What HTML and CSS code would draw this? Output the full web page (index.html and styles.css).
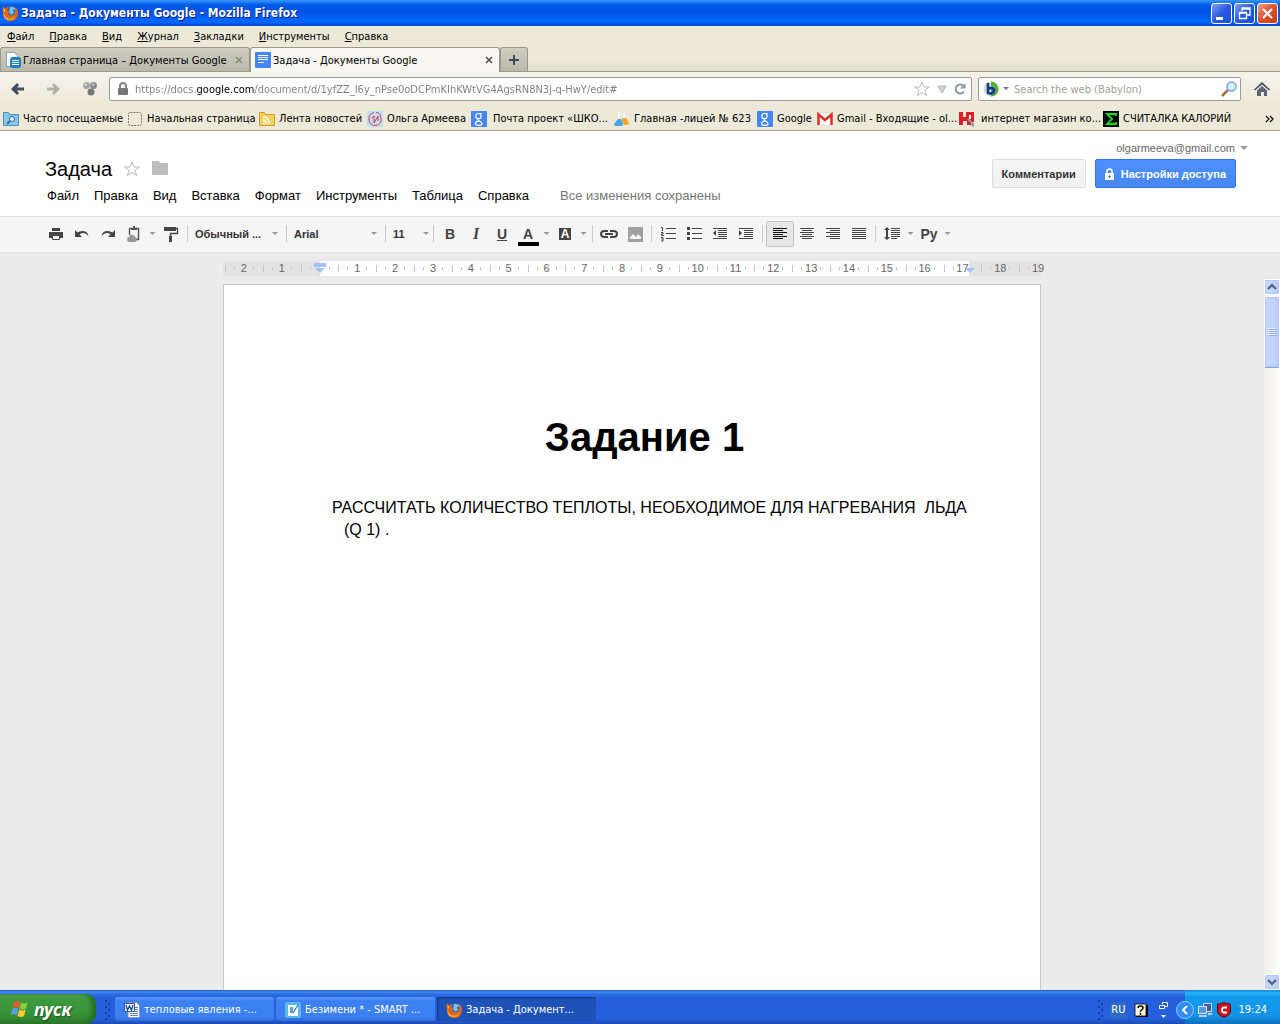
FILE: index.html
```html
<!DOCTYPE html>
<html lang="ru">
<head>
<meta charset="utf-8">
<title>Задача - Документы Google</title>
<link rel="stylesheet" href="styles.css">
</head>
<body>
<svg class="defs" aria-hidden="true">
  <defs>
    <symbol id="firefox" viewBox="0 0 16 16">
      <circle cx="8.500" cy="7.500" r="6.500" fill="#2b62b5"/>
      <path d="M8 2q4-1 6 3-2-1-3 0l1 3-3 2-2-3z" fill="#6fc3ee"/>
      <path d="M1 1l2 2.500q2-2 4-1-2 1-2 3l3 1-2 2q1 2 4 2 3-1 3-4 1-3-1-5 4 2 4 6 0 8-7 8.500-6 0-8-6.500-1-4 0-8.500z" fill="#e2661a"/>
      <path d="M1.500 5q0 6 4 8 5 2 8-3-1 5-6 5.500-5 0-6-5z" fill="#f7a12e"/>
      <path d="M1.500 3l1.500 2-1 3z" fill="#fbd04a"/>
    </symbol>
    <symbol id="gletter" viewBox="0 0 16 16">
      <rect width="16" height="16" rx="1" fill="#4486f4"/>
      <path d="M11 2.500H7.500C5.500 2.500 4.800 4 4.800 5.200c0 1.500 1 2.500 2.700 2.500 1.600 0 2.600-1 2.600-2.500 0-1.300-.8-2.200-1.600-2.600M7.500 7.800c-1 .7-.8 1.300.5 1.900 2 .9 3 1.500 3 2.700 0 1.300-1.500 2-3.200 2-2 0-3.300-.8-3.300-2.100 0-1.300 1.500-2.100 4-2.200" fill="none" stroke="#fff" stroke-width="1.200"/>
    </symbol>
    <symbol id="outline-star" viewBox="0 0 16 16">
      <path d="M8 1l2 5h5.300l-4.300 3.300 1.600 5.200L8 11.500l-4.600 3L5 9.300.7 6H6z" fill="#fff" stroke="#b9b9b9"/>
    </symbol>
  </defs>
</svg>

<header class="titlebar">
  <svg class="i16"><use href="#firefox"/></svg>
  <h1 class="window-title">Задача - Документы Google - Mozilla Firefox</h1>
  <div class="window-buttons">
    <button class="wbtn" aria-label="Свернуть"><svg viewBox="0 0 19 19"><path d="M4 13h7v3H4z" fill="#fff"/></svg></button>
    <button class="wbtn" aria-label="Восстановить"><svg viewBox="0 0 19 19"><path d="M7 7V4h8v7h-3M7 5h8M4.500 8.500h7v6h-7zM4 9h8" fill="none" stroke="#fff" stroke-width="1.300"/></svg></button>
    <button class="wbtn wbtn-close" aria-label="Закрыть"><svg viewBox="0 0 19 19"><path d="M5 5l9 9M14 5l-9 9" stroke="#fff" stroke-width="2.200"/></svg></button>
  </div>
</header>

<nav class="menubar" aria-label="Меню браузера">
  <button><u>Ф</u>айл</button><button><u>П</u>равка</button><button><u>В</u>ид</button><button><u>Ж</u>урнал</button><button><u>З</u>акладки</button><button><u>И</u>нструменты</button><button><u>С</u>правка</button>
</nav>

<div class="tabs">
  <div class="tab">
    <svg class="i16" viewBox="0 0 16 16"><path d="M1.500.5h8l3 3v11h-11z" fill="#fff" stroke="#7ba2c5"/><path d="M7 5h6q3 0 3 3v5q0 3-3 3H8q-3 0-3-3V8q0-2 2-3z" fill="#1b7fc0"/><path d="M7 8.500h7M7 10.500h7M7 12.500h7" stroke="#fff"/></svg>
    <span class="tab-label">Главная страница – Документы Google</span>
    <button class="tab-close" aria-label="Закрыть вкладку"><svg viewBox="0 0 8 8"><path d="M1 1l6 6M7 1L1 7" stroke="currentColor" stroke-width="1.500"/></svg></button>
  </div>
  <div class="tab tab-active">
    <svg class="i16" viewBox="0 0 16 16"><rect width="16" height="16" rx="1" fill="#4486f4"/><path d="M3 3.500h10M3 5.500h10M3 7.500h10M3 10.500h6" stroke="#fff"/></svg>
    <span class="tab-label">Задача - Документы Google</span>
    <button class="tab-close" aria-label="Закрыть вкладку"><svg viewBox="0 0 8 8"><path d="M1 1l6 6M7 1L1 7" stroke="currentColor" stroke-width="1.500"/></svg></button>
  </div>
  <button class="tab-new" aria-label="Новая вкладка"><svg viewBox="0 0 12 12"><path d="M6 1v10M1 6h10" stroke="#3d4a5a" stroke-width="2"/></svg></button>
</div>

<div class="navbar">
  <button class="nav-btn" aria-label="Назад"><svg class="i16" viewBox="0 0 16 16"><path d="M7 2L1 8l6 6 2-2-2-2.500h7v-3H7L9 4z" fill="#434f5e"/></svg></button>
  <button class="nav-btn" aria-label="Вперёд"><svg class="i16" viewBox="0 0 16 16"><path d="M8 2l6 6-6 6-2-2 2-2.500H1v-3h7L6 4z" fill="#b3b3ae"/></svg></button>
  <button class="nav-btn" aria-label="Дополнение"><svg class="i16" viewBox="0 0 16 16"><circle cx="4.500" cy="4.500" r="3.500" fill="#a2a2a2"/><circle cx="11.500" cy="4.500" r="3.500" fill="#8b8b8b"/><circle cx="9" cy="11" r="3.500" fill="#777"/><circle cx="3.500" cy="3.500" r="1.500" fill="#ccc"/><circle cx="11" cy="3.500" r="1.500" fill="#bbb"/></svg></button>
  <div class="field url-field">
    <svg class="i16" viewBox="0 0 16 16"><path d="M5 8V5q0-3 3-3t3 3v3" fill="none" stroke="#858585" stroke-width="2"/><rect x="3" y="7" width="10" height="7" rx="1" fill="#767676"/></svg>
    <input class="url" type="text" aria-label="Адрес" value="https://docs.google.com/document/d/1yfZZ_I6y_nPse0oDCPmKIhKWtVG4AgsRN8N3j-q-HwY/edit#">
    <svg class="i16"><use href="#outline-star"/></svg>
    <svg class="i10" viewBox="0 0 10 10"><path d="M1 2h8L5 9z" fill="#cfd5dc" stroke="#abb4bd"/></svg>
    <svg class="i12" viewBox="0 0 12 12"><path d="M10 8.500A4.500 4.500 0 1 1 9 2.500" fill="none" stroke="#8a96a4" stroke-width="2"/><path d="M11.500 0v5.500H6z" fill="#8a96a4"/></svg>
  </div>
  <div class="field search-field">
    <svg class="i16" viewBox="0 0 16 16"><circle cx="8" cy="8" r="7.500" fill="#c9e4c0"/><path d="M8 .5a7.500 7.500 0 0 1 0 15z" fill="#56b03a"/><path d="M5 2v11M5 9q0-2 3-2t3 2.500-3 3-3-2.500" fill="none" stroke="#1d2f9c" stroke-width="2.500"/></svg>
    <svg class="caret" viewBox="0 0 6 4"><path d="M0 0h6L3 3z" fill="#777"/></svg>
    <input class="search" type="search" aria-label="Поиск" placeholder="Search the web (Babylon)">
    <svg class="i16" viewBox="0 0 16 16"><path d="M1 15l6-6" stroke="#b0693a" stroke-width="2.500"/><circle cx="10.500" cy="5.500" r="4.500" fill="#d6effd" stroke="#7fa6dc" stroke-width="1.500"/></svg>
  </div>
  <button class="nav-btn" aria-label="Домой"><svg class="i16" viewBox="0 0 16 16"><path d="M0 8.500L8 1l8 7.500-1 1-7-6-7 6z" fill="#434f5e"/><path d="M3 9.500l5-4.500 5 4.500V15h-3v-4H7v4H3z" fill="#5a6674"/></svg></button>
</div>

<nav class="bookmarks" aria-label="Закладки">
  <a href="#"><svg class="i16" viewBox="0 0 16 16"><path d="M.5 1.500h5l1 2h9v11H.5z" fill="#8fc4ea" stroke="#4a8fc4"/><circle cx="9" cy="8" r="2.500" fill="#dff1fc" stroke="#2d6ea5"/><path d="M7 10l-3 3" stroke="#2d6ea5" stroke-width="2"/></svg>Часто посещаемые</a>
  <a href="#"><svg class="i16" viewBox="0 0 16 16"><rect x="1.500" y="1.500" width="13" height="13" rx="2" fill="none" stroke="#777" stroke-dasharray="2 1"/></svg>Начальная страница</a>
  <a href="#"><svg class="i16" viewBox="0 0 16 16"><path d="M.5 1.500h5l1 2h9v11H.5z" fill="#f7cf5c" stroke="#cf9c27"/><path d="M4 6q6 0 6 7M4 9q3 0 3 4" fill="none" stroke="#fff" stroke-width="1.500"/><circle cx="4.500" cy="12.500" r="1" fill="#fff"/></svg>Лента новостей</a>
  <a href="#"><svg class="i16" viewBox="0 0 16 16"><rect width="16" height="16" fill="#bfdff5"/><path d="M7 1.500Q1 3 2 9t7 5.500q6-1.500 5-7.500t-5-5.500M4.500 7L7 5v7l4-7v5" fill="none" stroke="#de3d48"/></svg>Ольга Армеева</a>
  <a href="#"><svg class="i16"><use href="#gletter"/></svg><span class="indented">Почта проект «ШКО...</span></a>
  <a href="#"><svg class="i16" viewBox="0 0 16 16"><path d="M5 1v6M10 2v5" stroke="#fff" stroke-width="2"/><path d="M4 8h3l2 5q0 2-2 2H2q-2 0-2-2z" fill="#45a3df"/><path d="M8 7h4l3 5q0 2-2 2h-3l-2-4z" fill="#f6a332"/></svg>Главная -лицей № 623</a>
  <a href="#"><svg class="i16"><use href="#gletter"/></svg>Google</a>
  <a href="#"><svg class="i16" viewBox="0 0 16 16"><rect y="2" width="16" height="12" rx="1" fill="#fff" stroke="#d9d9d9"/><path d="M1.500 14V3.500L8 9l6.500-5.500V14" fill="none" stroke="#dc2f25" stroke-width="2.500"/></svg>Gmail - Входящие - ol...</a>
  <a href="#"><svg class="i16" viewBox="0 0 16 16"><path d="M0 1h4v5h3V1h8v10h-3v3H8v-4H4v4H0z" fill="#dc1f26"/><path d="M10 4h2v4h-2z" fill="#fff"/><path d="M9 8l5 5-1 1 2 1" fill="none" stroke="#999" stroke-width="2"/></svg><span class="indented">интернет магазин ко...</span></a>
  <a href="#"><svg class="i16" viewBox="0 0 16 16"><rect width="16" height="16"/><path d="M13 5V3H4l5 5-5 5h9v-2" fill="none" stroke="#0fe01f" stroke-width="1.800"/></svg>СЧИТАЛКА КАЛОРИЙ</a>
  <button class="more" aria-label="Ещё закладки"><svg class="i10" viewBox="0 0 10 10"><path d="M1 2l3 3-3 3M5 2l3 3-3 3" fill="none" stroke="#111" stroke-width="1.300"/></svg></button>
</nav>

<section class="docs-header">
  <div class="docs-main">
    <div class="title-row">
      <h2 class="doc-title">Задача</h2>
      <svg class="i16"><use href="#outline-star"/></svg>
      <svg class="i16" viewBox="0 0 16 16"><path d="M0 0h7l1 2h8v12H0z" fill="#bdbdbd"/></svg>
    </div>
    <nav class="docs-menu" aria-label="Меню документа">
      <button>Файл</button><button>Правка</button><button>Вид</button><button>Вставка</button><button>Формат</button><button>Инструменты</button><button>Таблица</button><button>Справка</button>
      <span class="saved">Все изменения сохранены</span>
    </nav>
  </div>
  <div class="docs-side">
    <button class="account">olgarmeeva@gmail.com <svg class="account-caret" viewBox="0 0 8 4"><path d="M0 0h8L4 4z" fill="#999"/></svg></button>
    <div class="actions">
      <button class="btn">Комментарии</button>
      <button class="btn btn-primary"><svg class="lock" viewBox="0 0 9 12"><path d="M2 6V3.500q0-2.500 2.500-2.500T7 3.500V6" fill="none" stroke="#fff" stroke-width="1.500"/><path d="M0 5h9v7H0z" fill="#fff"/><path d="M4 7h1v1h1v1H5v1H4V9H3V8h1z" fill="#4787ed"/></svg>Настройки доступа</button>
    </div>
  </div>
</section>

<div class="toolbar" role="toolbar" aria-label="Форматирование">
  <button class="tool" aria-label="Печать"><svg class="i16" viewBox="0 0 16 16"><path d="M4 2h8v3H4zM1 6h14v6h-3V9H4v3H1z" fill="#444"/><path d="M4.500 9.500h7v4h-7z" fill="#f5f5f5" stroke="#444"/></svg></button>
  <button class="tool" aria-label="Отменить"><svg class="i16" viewBox="0 0 16 16"><path d="M1 4v7h7L5.500 8.500Q10 5 14.500 10q-1-5-6-5Q5.500 5 3.500 6.500z" fill="#444"/></svg></button>
  <button class="tool" aria-label="Повторить"><svg class="i16" viewBox="0 0 16 16"><path d="M15 4v7H8l2.500-2.500Q6 5 1.500 10q1-5 6-5 3 0 5 1.500z" fill="#444"/></svg></button>
  <button class="tool" aria-label="Веб-буфер"><svg class="i16" viewBox="0 0 16 16"><path d="M3.500 9V2.500h9v11H10" fill="none" stroke="#555" stroke-width="1.400"/><path d="M5 2h2V0h2v2h2v2H5z" fill="#555"/><path d="M4 16q-3 0-3-3 0-2 2-2 1-3 4-2 2 0 2 2 2 0 2 2.500T9 16z" fill="#999"/></svg></button>
  <button class="drop" aria-label="Открыть веб-буфер"></button>
  <button class="tool" aria-label="Копировать форматирование"><svg class="i16" viewBox="0 0 16 16"><path d="M1 1h12v4H1z" fill="#444"/><path d="M13 2.500h1.500v5h-7v3" fill="none" stroke="#444" stroke-width="1.300"/><path d="M6 10h3v6H6z" fill="#444"/></svg></button>
  <i class="sep"></i>
  <label class="pick"><select aria-label="Стиль"><option>Обычный ...</option></select></label>
  <i class="sep"></i>
  <label class="pick"><select aria-label="Шрифт"><option>Arial</option></select></label>
  <i class="sep"></i>
  <label class="pick pick-small"><select aria-label="Размер"><option>11</option></select></label>
  <i class="sep"></i>
  <button class="tool letter" aria-label="Полужирный"><b>B</b></button>
  <button class="tool letter italic" aria-label="Курсив"><b>I</b></button>
  <button class="tool letter" aria-label="Подчёркнутый"><u>U</u></button>
  <button class="tool letter text-color" aria-label="Цвет текста">A</button>
  <button class="drop" aria-label="Выбрать цвет текста"></button>
  <button class="tool" aria-label="Цвет фона"><span class="marker">A</span></button>
  <button class="drop" aria-label="Выбрать цвет фона"></button>
  <i class="sep"></i>
  <button class="tool" aria-label="Ссылка"><svg class="link-icon" viewBox="0 0 18 16"><path d="M8 5H4.500Q1 5 1 8t3.500 3H8M10 5h3.500Q17 5 17 8t-3.500 3H10M5 8h8" fill="none" stroke="#444" stroke-width="2"/></svg></button>
  <button class="tool" aria-label="Изображение"><svg class="i16" viewBox="0 0 16 16"><path d="M1 1h15v15H1z" fill="#a0a0a0"/><path d="M3 13v-2l3-3 3 3 2-3 3 3v2z" fill="#f5f5f5"/></svg></button>
  <i class="sep"></i>
  <button class="tool" aria-label="Нумерованный список"><svg class="i16" viewBox="0 0 16 16"><path d="M6 2.500h10M6 7.500h10M6 12.500h10M1 1.500h1.500V5M1 6.500h2v1.500H1.500v1.500H4M1 11.500h2V15H1M3 13H1.500" fill="none" stroke="#444"/></svg></button>
  <button class="tool" aria-label="Маркированный список"><svg class="i16" viewBox="0 0 16 16"><path d="M1 1h3v3H1zM1 6h3v3H1zM1 11h3v3H1z" fill="#444"/><path d="M6 2.500h10M6 7.500h10M6 12.500h10" stroke="#444"/></svg></button>
  <button class="tool" aria-label="Уменьшить отступ"><svg class="i16" viewBox="0 0 16 16"><path d="M1 2.500h14M6 4.500h9M6 6.500h9M6 8.500h9M6 10.500h9M1 12.500h14" stroke="#444"/><path d="M4 4v6L1 7z" fill="#444"/></svg></button>
  <button class="tool" aria-label="Увеличить отступ"><svg class="i16" viewBox="0 0 16 16"><path d="M1 2.500h14M6 4.500h9M6 6.500h9M6 8.500h9M6 10.500h9M1 12.500h14" stroke="#444"/><path d="M1 4v6l3-3z" fill="#444"/></svg></button>
  <i class="sep"></i>
  <button class="tool pressed" aria-label="По левому краю" aria-pressed="true"><svg class="i16" viewBox="0 0 16 16"><path d="M1 2.500h14M1 4.500h10M1 6.500h14M1 8.500h10M1 10.500h14M1 12.500h10" stroke="#111"/></svg></button>
  <button class="tool" aria-label="По центру"><svg class="i16" viewBox="0 0 16 16"><path d="M1 2.500h14M3 4.500h10M1 6.500h14M3 8.500h10M1 10.500h14M3 12.500h10" stroke="#444"/></svg></button>
  <button class="tool" aria-label="По правому краю"><svg class="i16" viewBox="0 0 16 16"><path d="M1 2.500h14M5 4.500h10M1 6.500h14M5 8.500h10M1 10.500h14M5 12.500h10" stroke="#444"/></svg></button>
  <button class="tool" aria-label="По ширине"><svg class="i16" viewBox="0 0 16 16"><path d="M1 2.500h14M1 4.500h14M1 6.500h14M1 8.500h14M1 10.500h14M1 12.500h14" stroke="#444"/></svg></button>
  <i class="sep"></i>
  <button class="tool" aria-label="Интервал"><svg class="i16" viewBox="0 0 16 16"><path d="M7 2.500h9M7 4.500h9M7 6.500h9M7 8.500h9M7 10.500h9M7 12.500h6" stroke="#444"/><path d="M3 3v10" stroke="#444" stroke-width="2"/><path d="M3 1l3 3H0zM3 14l3-3H0z" fill="#444"/></svg></button>
  <button class="drop" aria-label="Выбрать интервал"></button>
  <button class="tool input-lang" aria-label="Способ ввода">Ру</button>
  <button class="drop" aria-label="Выбрать способ ввода"></button>
</div>

<main class="workspace">
  <div class="ruler-row">
    <div class="ruler">
      <ol class="marks">
        <li>2</li><li>1</li><li class="zero"></li><li>1</li><li>2</li><li>3</li><li>4</li><li>5</li><li>6</li><li>7</li><li>8</li><li>9</li><li>10</li><li>11</li><li>12</li><li>13</li><li>14</li><li>15</li><li>16</li><li>17</li><li>18</li><li>19</li>
      </ol>
      <svg class="indent indent-left" viewBox="0 0 12 11"><path d="M0 0h12v4H0zM1 5h10L6 10z" fill="#a4c2f7"/></svg>
      <svg class="indent indent-right" viewBox="0 0 12 11"><path d="M1 5h10L6 10z" fill="#a4c2f7"/></svg>
    </div>
  </div>
  <div class="canvas">
    <div class="page-area">
      <article class="paper">
        <h3 class="heading">Задание 1</h3>
        <p class="task">РАССЧИТАТЬ КОЛИЧЕСТВО ТЕПЛОТЫ, НЕОБХОДИМОЕ ДЛЯ НАГРЕВАНИЯ&nbsp; ЛЬДА (Q 1) .</p>
      </article>
    </div>
    <div class="scrollbar">
      <button class="scroll-btn" aria-label="Вверх"><svg class="i10" viewBox="0 0 10 10"><path d="M1 7l4-4 4 4" fill="none" stroke="#4d6185" stroke-width="2.200"/></svg></button>
      <div class="thumb"><svg class="i10" viewBox="0 0 10 10"><path d="M1 1.500h7M1 3.500h7M1 5.500h7M1 7.500h7" stroke="#eef4fe"/><path d="M2 2.500h7M2 4.500h7M2 6.500h7M2 8.500h7" stroke="#8cb0f8"/></svg></div>
      <button class="scroll-btn scroll-down" aria-label="Вниз"><svg class="i10" viewBox="0 0 10 10"><path d="M1 3l4 4 4-4" fill="none" stroke="#4d6185" stroke-width="2.200"/></svg></button>
    </div>
  </div>
</main>

<footer class="taskbar">
  <button class="start"><svg class="flag" viewBox="0 0 20 20"><path d="M4 3q3-2 6 0L8.500 9q-3-2-6 0z" fill="#f0592b"/><path d="M11 3.500q3 2 6.500 0L16 9.500q-3 2-6.500 0z" fill="#8cce3c"/><path d="M2.300 10q3-2 6 0L7 16q-3-2-6 0z" fill="#5b9cf5"/><path d="M9.300 10.500q3 2 6.500 0L14 17q-3 2-6.500 0z" fill="#fccb31"/></svg>пуск</button>
  <svg class="grip" viewBox="0 0 6 20"><path d="M1 0h2v2H1zM4 3h2v2H4zM1 6h2v2H1zM4 9h2v2H4zM1 12h2v2H1zM4 15h2v2H4zM1 18h2v2H1z" fill="#123fae"/></svg>
  <div class="tasks">
    <button class="task-btn"><svg class="i16" viewBox="0 0 16 16"><path d="M4 .5h8.500l3 3v12H4z" fill="#fff" stroke="#8a97b0"/><path d="M6 11.500h8M6 13.500h8M11 5.500h3M11 7.500h3M11 9.500h3" stroke="#5b7fc7"/><path d="M.5 1.500h10v8H.5z" fill="#fff" stroke="#2b579a"/><path d="M2 3l1.500 5L5.500 4l2 4L9 3" fill="none" stroke="#1f4b99" stroke-width="1.400"/></svg><span>тепловые явления -...</span></button>
    <button class="task-btn"><svg class="i16" viewBox="0 0 16 16"><rect width="16" height="16" rx="2" fill="#5cb8e8"/><path d="M3 3h10v11H3z" fill="#fff"/><path d="M5 6h3M5 8h3M5 10h3M8 11l5-8" stroke="#2a82bd" stroke-width="1.300"/></svg><span>Безимени * - SMART ...</span></button>
    <button class="task-btn task-current"><svg class="i16"><use href="#firefox"/></svg><span>Задача - Документ...</span></button>
  </div>
  <svg class="grip" viewBox="0 0 6 20"><path d="M1 0h2v2H1zM4 3h2v2H4zM1 6h2v2H1zM4 9h2v2H4zM1 12h2v2H1zM4 15h2v2H4zM1 18h2v2H1z" fill="#123fae"/></svg>
  <div class="lang-bar">
    <span class="lang">RU</span>
    <svg class="i16" viewBox="0 0 16 16"><path d="M3 3h12v12H3z" fill="#000"/><path d="M2 2h11v12H2z" fill="#fffde0" stroke="#222"/><path d="M5 6q0-2 2.500-2T10 6q0 1-1.500 2T7.500 10M7.500 11v2" fill="none" stroke="#000" stroke-width="1.500"/></svg>
    <svg class="lang-tools" viewBox="0 0 9 16"><path d="M3.500 2.500v-2h5v4H6M.5 3.500h5v3h-5z" fill="none" stroke="#fff"/><path d="M2 13h5l-2.500 3z" fill="#fff"/></svg>
  </div>
  <div class="tray">
    <svg class="chevron" viewBox="0 0 18 18"><circle cx="9" cy="9" r="8.500" fill="#2f8cf0" stroke="#8fd0fa"/><path d="M11 5L7 9l4 4" fill="none" stroke="#fff" stroke-width="2"/></svg>
    <svg class="i16" viewBox="0 0 16 16"><path d="M6.500 1.500h8v8h-8z" fill="#3b5fa2" stroke="#ced8e6"/><path d="M1.500 4.500h8v7h-8z" fill="#5e97df" stroke="#dfe6ee"/><path d="M2 14h8M11 12h4" stroke="#c3cddb" stroke-width="2"/></svg>
    <svg class="i16" viewBox="0 0 16 16"><path d="M8 .5q3 1.500 6.500 1.500v7q0 4-6.500 6.500Q1.500 13 1.500 9V2Q5 2 8 .5z" fill="#c9141b" stroke="#5c0a0d"/><path d="M11 5.500H8Q6 5.500 6 8t2 2.500h3" fill="none" stroke="#fff" stroke-width="1.800"/></svg>
    <time>19:24</time>
  </div>
</footer>
</body>
</html>
```
FILE: styles.css
```css
* { box-sizing: border-box; }

body {
  margin: 0;
  height: 100vh;
  display: flex;
  flex-direction: column;
  overflow: hidden;
  background: #ebebeb;
  color: #000;
  font: 11px/14px "DejaVu Sans Condensed", "Noto Sans", sans-serif;
}

button, input, select {
  font: inherit;
  color: inherit;
  border: 0;
  margin: 0;
  padding: 0;
  background: none;
  border-radius: 0;
}

button { white-space: nowrap; }
h1, h2, h3, p, ol { margin: 0; padding: 0; }
a { color: inherit; text-decoration: none; }
svg { flex: none; display: block; }
.defs { position: absolute; width: 0; height: 0; }
.i16 { width: 16px; height: 16px; }
.i12 { width: 12px; height: 12px; }
.i10 { width: 10px; height: 10px; }

/* Window title */
.titlebar {
  flex: none;
  height: 26px;
  display: flex;
  align-items: center;
  gap: 3px;
  padding: 0 2px;
  background: linear-gradient(#3a94ff 0, #2080f5 2px, #0058e6 5px, #0054e3 12px, #0064fb 19px, #0068ff 22px, #0044d0 26px);
}
.window-title {
  flex: 1;
  color: #fff;
  font: bold 12px/18px "DejaVu Sans Condensed", "Noto Sans", sans-serif;
  text-shadow: 1px 1px #0a1883;
}
.window-buttons { display: flex; gap: 2px; }
.wbtn {
  width: 21px;
  height: 21px;
  border: 1px solid #fff;
  border-radius: 3px;
  background: linear-gradient(135deg, #7d9ff3, #2a5ae0 50%, #1c50d8);
}
.wbtn-close { background: linear-gradient(135deg, #f0a08a, #dc4f2c 50%, #c53c12); }

/* Browser chrome */
.menubar {
  flex: none;
  height: 20px;
  display: flex;
  align-items: center;
  gap: 15px;
  padding: 1px 7px 0;
  background: #ece9d8;
}
.tabs {
  flex: none;
  height: 26px;
  display: flex;
  align-items: stretch;
  padding-top: 1px;
  background: linear-gradient(#ece9d8 60%, #dfdccb);
  border-bottom: 1px solid #9d9b8b;
}
.tab, .tab-new {
  border: 1px solid #9a988c;
  border-bottom: 0;
  border-radius: 3px 3px 0 0;
  background: linear-gradient(#cfcdc0, #bbb9ac);
}
.tab {
  width: 250px;
  display: flex;
  align-items: center;
  gap: 2px;
  padding: 0 6px 0 4px;
}
.tab-active {
  margin-bottom: -1px;
  background: #f7f6f0;
}
.tab-label { flex: 1; padding-top: 2px; white-space: nowrap; }
.tab-close { width: 8px; height: 8px; color: #8b897e; }
.tab-active .tab-close { color: #4a4a4a; }
.tab-new { width: 28px; padding: 0 7px; }
.tab-new svg { width: 12px; height: 12px; }

.navbar {
  flex: none;
  height: 34px;
  display: flex;
  align-items: center;
  padding: 0 9px;
  background: linear-gradient(#f5f4ec, #ece9d8);
}
.nav-btn { width: 36px; padding-left: 1px; }
.nav-btn:last-child { width: 30px; padding-left: 13px; }
.field {
  height: 24px;
  display: flex;
  align-items: center;
  border: 1px solid #9c9b94;
  border-radius: 2px;
  background: #fff;
}
.url-field { flex: 1; gap: 7px; padding: 0 5px; margin-right: 6px; margin-left: -8px; }
.url {
  flex: 1;
  min-width: 0;
  height: 16px;
  margin-left: -3px;
  outline: 0;
  color: transparent;
  background: linear-gradient(90deg, #7d7d7d 62px, #000 62px, #000 119px, #7d7d7d 119px);
  -webkit-background-clip: text;
  background-clip: text;
}
.search-field { width: 263px; gap: 4px; padding: 0 3px 0 4px; }
.caret { width: 6px; height: 4px; }
.search { flex: 1; min-width: 0; height: 16px; padding: 1px 0 0 1px; outline: 0; appearance: none; }
.search::placeholder { color: #a09f98; }

.bookmarks {
  flex: none;
  height: 25px;
  display: grid;
  grid-template-columns: 124px 132px 108px 104px 143px 143px 60px 142px 144px 1fr auto;
  align-items: center;
  padding: 1px 5px 0 3px;
  background: #ece9d8;
  border-bottom: 1px solid #aca899;
}
.bookmarks a { display: flex; align-items: center; gap: 4px; white-space: nowrap; }
.indented { padding-left: 2px; }

/* Document header */
.docs-header {
  flex: none;
  height: 85px;
  display: flex;
  justify-content: space-between;
  background: #fff;
  color: #000;
  font-family: "Liberation Sans", Arial, sans-serif;
}
.docs-main { padding: 26px 0 0 45px; }
.title-row { display: flex; align-items: center; gap: 12px; }
.doc-title { font-size: 20px; line-height: 24px; font-weight: normal; }
.docs-menu {
  display: flex;
  gap: 15px;
  padding: 7px 0 0 2px;
  font-size: 13px;
  line-height: 16px;
}
.saved { margin-left: 16px; color: #777; }
.docs-side {
  display: flex;
  flex-direction: column;
  align-items: flex-end;
  padding: 10px 32px 0 0;
}
.account { display: flex; align-items: center; gap: 5px; color: #666; }
.account-caret { width: 8px; height: 4px; }
.actions { display: flex; gap: 9px; padding: 4px 12px 0 0; }
.btn {
  height: 29px;
  padding: 0 9px;
  border: 1px solid #dcdcdc;
  border-radius: 2px;
  background: linear-gradient(#f6f6f6, #f1f1f1);
  color: #333;
  font-weight: bold;
}
.btn-primary {
  display: flex;
  align-items: center;
  gap: 7px;
  border-color: #3079ed;
  background: linear-gradient(#4d90fe, #4787ed);
  color: #fff;
}
.lock { width: 9px; height: 12px; }

/* Formatting toolbar */
.toolbar {
  flex: none;
  height: 37px;
  display: flex;
  align-items: center;
  padding: 0 43px 2px;
  background: #f5f5f5;
  border: solid #e3e3e3;
  border-width: 1px 0;
  color: #333;
  font-family: "Liberation Sans", Arial, sans-serif;
  font-weight: bold;
}
.tool {
  flex: none;
  width: 26px;
  height: 26px;
  display: flex;
  align-items: center;
  justify-content: center;
  color: #444;
}
.pressed {
  width: 28px;
  border: 1px solid #c4c4c4;
  border-radius: 2px;
  background: #e6e6e6;
}
.letter { font: bold 14px/16px "Liberation Sans", Arial, sans-serif; }
.italic { font-family: "Liberation Serif", serif; font-style: italic; font-size: 16px; }
.text-color { background: linear-gradient(#000, #000) 50% 21px / 21px 4px no-repeat; }
.marker { width: 12px; background: #444; color: #fff; font-size: 12px; line-height: 12px; }
.link-icon { width: 18px; height: 16px; }
.input-lang { font-size: 14px; }
.drop { width: 11px; height: 26px; flex: none; }
.drop::after, .pick::after {
  content: "";
  display: block;
  margin: 0 auto;
  width: 6px;
  height: 3px;
  background: #999;
  clip-path: polygon(0 0, 100% 0, 50% 100%);
}
.sep { flex: none; width: 1px; height: 17px; margin: 0 3px; background: #ccc; }
.pick { flex: none; width: 92px; display: flex; align-items: center; padding: 0 5px 0 4px; }
.pick-small { width: 41px; padding-right: 1px; }
.pick select { flex: 1; min-width: 0; appearance: none; outline: 0; }

/* Ruler and page */
.workspace { flex: 1; min-height: 0; display: flex; flex-direction: column; }
.ruler-row { flex: none; display: flex; justify-content: center; padding: 8px 13px 3px 0; }
.ruler {
  position: relative;
  width: 821px;
  height: 15px;
  overflow: hidden;
  background: linear-gradient(90deg, #e3e3e3 97px, #fff 97px, #fff 746px, #e3e3e3 746px, #e3e3e3 818px, #ebebeb 818px);
}
.marks {
  width: 832px;
  margin-left: 2px;
  display: grid;
  grid-template-columns: repeat(22, 1fr);
  list-style: none;
  color: #666;
  font: 11px/15px "Liberation Sans", Arial, sans-serif;
  text-align: center;
}
.marks li {
  height: 15px;
  background:
    linear-gradient(#c4c4c4, #c4c4c4) 0 4px / 1px 7px no-repeat,
    linear-gradient(#c4c4c4, #c4c4c4) 9px 6px / 1px 3px no-repeat,
    linear-gradient(#c4c4c4, #c4c4c4) 28px 6px / 1px 3px no-repeat;
}
.indent { position: absolute; top: 2px; width: 12px; height: 11px; }
.indent-left { left: 91px; }
.indent-right { left: 741px; }

.canvas { flex: 1; min-height: 0; display: flex; }
.page-area { flex: 1; display: flex; justify-content: center; padding-top: 5px; overflow: hidden; }
.paper {
  width: 818px;
  min-height: 1060px;
  padding: 128px 71px 0 108px;
  border: 1px solid #c9c9c9;
  background: #fff;
  font-family: "Liberation Sans", Arial, sans-serif;
}
.heading { padding-right: 12px; text-align: center; font-size: 40px; line-height: 48px; }
.task { margin-top: 36px; padding-left: 12px; text-indent: -12px; font-size: 16px; line-height: 22px; }

.scrollbar {
  width: 16px;
  display: flex;
  flex-direction: column;
  gap: 1px;
  background: linear-gradient(90deg, #f0efe8, #fefefb);
}
.scroll-btn, .thumb {
  height: 16px;
  display: flex;
  align-items: center;
  justify-content: center;
  border: 1px solid #fff;
  border-radius: 2px;
  box-shadow: inset 0 0 0 1px #b2c8f7;
  background: linear-gradient(90deg, #c9d8fd, #bacdfb);
}
.thumb { height: 72px; border-bottom-color: #8ba9e8; }
.scroll-down { margin-top: auto; }

/* Taskbar */
.taskbar {
  flex: none;
  height: 34px;
  display: flex;
  align-items: stretch;
  background: linear-gradient(#1f57bd 0, #3f8cf3 2px, #2f6fe5 4px, #245edb 8px, #2560dd 28px, #1c4cb4 34px);
  color: #fff;
}
.start {
  width: 96px;
  display: flex;
  align-items: center;
  gap: 4px;
  margin-top: 4px;
  padding-left: 10px;
  border-radius: 0 10px 10px 0;
  background: linear-gradient(#5eac56 0, #3c9b3c 5px, #379237 20px, #2d7a2d 30px);
  box-shadow: inset -4px 0 5px #256b25;
  font: italic bold 18px/20px "Noto Sans", sans-serif;
  text-shadow: 1px 1px 2px #1b4d1b;
}
.flag { width: 20px; height: 20px; }
.grip { width: 6px; height: 20px; margin: 10px 0 0 8px; }
.tasks { flex: 1; display: flex; gap: 2px; padding: 7px 0 3px 5px; }
.task-btn {
  width: 159px;
  display: flex;
  align-items: center;
  gap: 4px;
  padding: 1px 9px 0;
  border-radius: 2px;
  background: linear-gradient(#5a96f8, #3c81f3 4px, #3b7ff0 20px, #2f6bdc);
}
.task-current { background: #1e52b7; box-shadow: inset 1px 1px 2px #123680; }
.lang-bar { display: flex; align-items: center; gap: 7px; padding: 5px 13px 0 7px; }
.lang { padding: 1px 1px; background: #316ac5; }
.lang-tools { width: 9px; height: 16px; margin-left: 3px; }
.tray {
  display: flex;
  align-items: center;
  gap: 3px;
  margin-left: 4px;
  padding: 5px 13px 0 0;
  background: linear-gradient(#0d7fd6 0, #29b4f5 3px, #129bec 7px, #1292e6 26px, #0e6fc0);
}
.chevron { width: 18px; height: 18px; margin-left: -9px; }
.tray time { padding-left: 3px; }
```
